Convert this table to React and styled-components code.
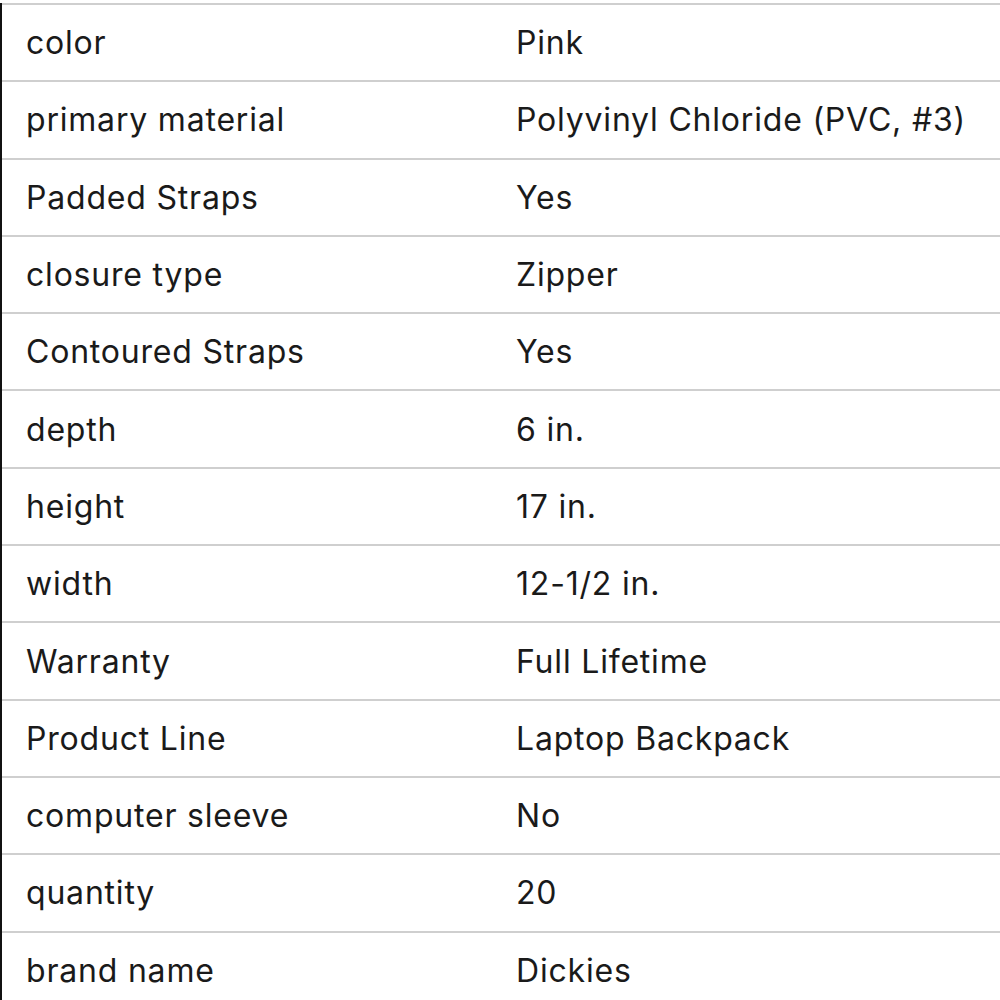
import React from "react";
import styled, { createGlobalStyle } from "styled-components";

const Global = createGlobalStyle`
  body {
    margin: 0;
    background: #fff;
    font-family: Inter, "Liberation Sans", Arial, sans-serif;
    overflow: hidden;
  }
`;

const Table = styled.div`
  margin-top: 3px;
  border-left: 2px solid #111;
  width: 1000px;
`;

const Row = styled.div`
  display: grid;
  grid-template-columns: 514px 1fr;
  height: 77.3px;
  box-sizing: border-box;
  border-top: 2px solid #cfcfcf;
  align-items: center;
`;

const Cell = styled.div`
  font-size: 32px;
  letter-spacing: 0.8px;
  color: #1a1a1a;
  padding-left: ${props => (props.value ? "0" : "24px")};
  white-space: nowrap;
`;

const specs = [
  ["color", "Pink"],
  ["primary material", "Polyvinyl Chloride (PVC, #3)"],
  ["Padded Straps", "Yes"],
  ["closure type", "Zipper"],
  ["Contoured Straps", "Yes"],
  ["depth", "6 in."],
  ["height", "17 in."],
  ["width", "12-1/2 in."],
  ["Warranty", "Full Lifetime"],
  ["Product Line", "Laptop Backpack"],
  ["computer sleeve", "No"],
  ["quantity", "20"],
  ["brand name", "Dickies"],
];

const App = () => (
  <>
    <Global />
    <Table>
      {specs.map(([name, value]) => (
        <Row key={name}>
          <Cell>{name}</Cell>
          <Cell value>{value}</Cell>
        </Row>
      ))}
    </Table>
  </>
);

export default App;
